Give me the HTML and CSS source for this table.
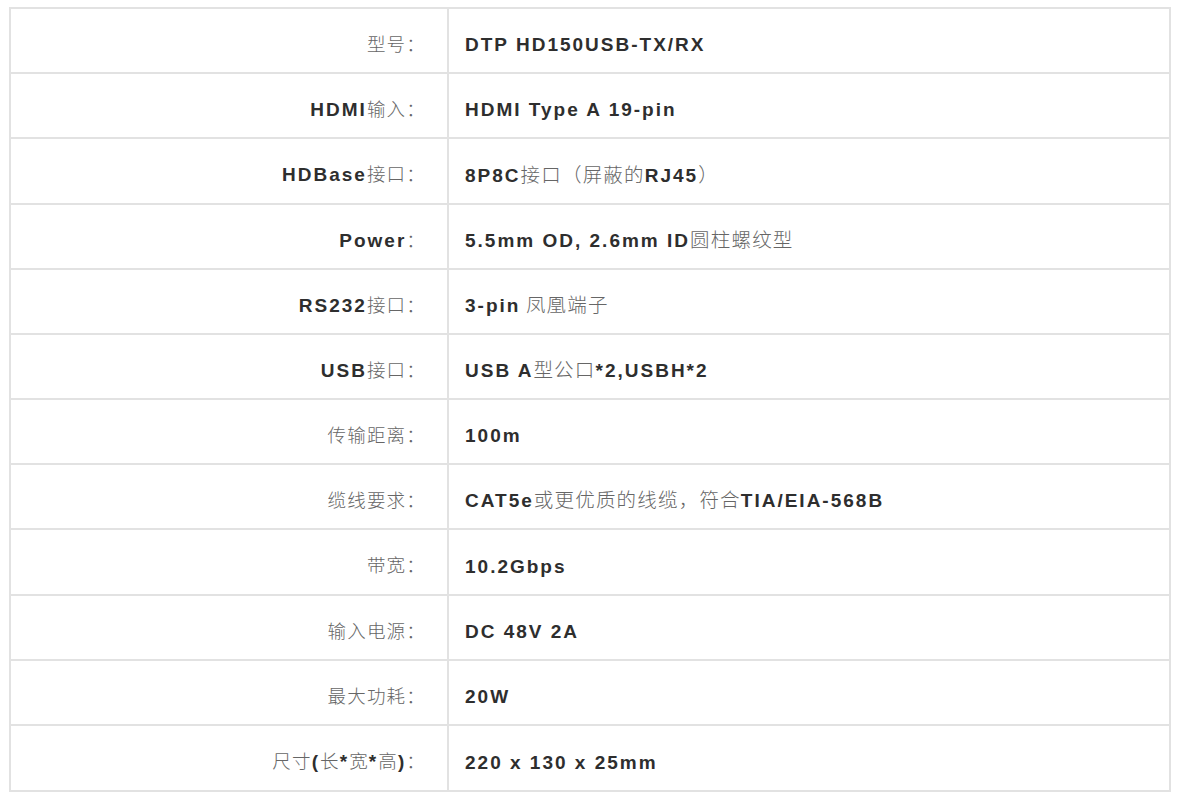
FILE: index.html
```html
<!DOCTYPE html>
<html lang="zh-CN">
<head>
<meta charset="utf-8">
<title>规格参数</title>
<link rel="stylesheet" href="styles.css">
</head>
<body>
<div class="page">
<table class="spec">
<tbody>
<tr><th>型号：</th><td><b>DTP HD150USB-TX/RX</b></td></tr>
<tr><th><b>HDMI</b>输入：</th><td><b>HDMI Type A 19-pin</b></td></tr>
<tr class="tall"><th><b>HDBase</b>接口：</th><td><b>8P8C</b>接口（屏蔽的<b>RJ45</b>）</td></tr>
<tr><th><b>Power</b>：</th><td><b>5.5mm OD, 2.6mm ID</b>圆柱螺纹型</td></tr>
<tr><th><b>RS232</b>接口：</th><td><b>3-pin</b> 凤凰端子</td></tr>
<tr><th><b>USB</b>接口：</th><td><b>USB A</b>型公口<b>*2,USBH*2</b></td></tr>
<tr><th>传输距离：</th><td><b>100m</b></td></tr>
<tr><th>缆线要求：</th><td><b>CAT5e</b>或更优质的线缆，符合<b>TIA/EIA-568B</b></td></tr>
<tr class="tall"><th>带宽：</th><td><b>10.2Gbps</b></td></tr>
<tr><th>输入电源：</th><td><b>DC 48V 2A</b></td></tr>
<tr><th>最大功耗：</th><td><b>20W</b></td></tr>
<tr class="tall"><th>尺寸<b>(</b>长<b>*</b>宽<b>*</b>高<b>)</b>：</th><td><b>220 x 130 x 25mm</b></td></tr>
</tbody>
</table>
</div>
</body>
</html>
```

FILE: styles.css
```css
html, body {
  margin: 0;
  padding: 0;
  background: #ffffff;
}

.page {
  padding: 7px 9px 0 9px;
}

.spec {
  width: 1162px;
  border-collapse: collapse;
  border: 2px solid #dedede;
  font-family: "Liberation Sans", "Noto Sans CJK SC", sans-serif;
  font-size: 18px;
  color: #666666;
}

.spec tr {
  height: 65px;
}

.spec tr.tall {
  height: 66px;
}

.spec th,
.spec td {
  border: 2px solid #e2e2e2;
  padding: 0;
  vertical-align: middle;
  font-family: "Noto Sans CJK SC", sans-serif;
  font-size: 18.5px;
  letter-spacing: 1.2px;
  font-weight: 300;
  color: #666666;
  white-space: nowrap;
  padding-top: 4px;
}

.spec th {
  width: 415px;
  text-align: right;
  padding-right: 21px;
}

.spec td {
  text-align: left;
  padding-left: 16px;
  font-size: 19.5px;
}

.spec b {
  font-family: "Liberation Sans", sans-serif;
  font-size: 19px;
  font-weight: 700;
  color: #2e2e2e;
  letter-spacing: 2px;
}
```
